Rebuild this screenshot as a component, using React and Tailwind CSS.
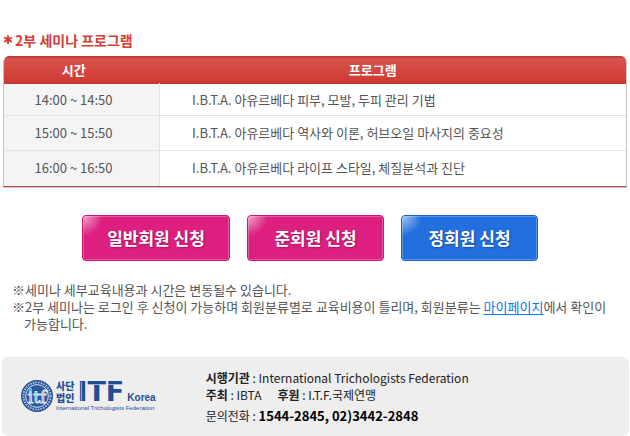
import clsx from 'clsx';

const sessions = [
  { time: '14:00 ~ 14:50', program: 'I.B.T.A. 아유르베다 피부, 모발, 두피 관리 기법' },
  { time: '15:00 ~ 15:50', program: 'I.B.T.A. 아유르베다 역사와 이론, 허브오일 마사지의 중요성' },
  { time: '16:00 ~ 16:50', program: 'I.B.T.A. 아유르베다 라이프 스타일, 체질분석과 진단' },
];

const ProgramTable = () => (
  <div className="overflow-hidden rounded-t-md border-x border-b border-x-[#c4c4c4] border-b-[#b8484a] shadow-[0_1px_0_#c8c8c8]">
    <table className="w-full table-fixed border-collapse">
      <thead>
        <tr className="h-[27px] border-t border-b border-t-[#b04340] border-b-[#b43a34] bg-linear-to-b from-[#d7544e] to-[#d03830] text-[13px] leading-5 text-white">
          <th className="w-1/4 pr-4 font-bold">시간</th>
          <th className="pr-10 font-bold">프로그램</th>
        </tr>
      </thead>
      <tbody className="text-[13px] leading-5 text-[#555]">
        {sessions.map((session, index) => (
          <tr key={session.time} className={clsx('border-[#e2e2e2]', index === 0 ? 'h-8' : 'h-[35px] border-t')}>
            <td className="border-r border-[#e2e2e2] bg-[#f4f4f4] pr-4 text-center">{session.time}</td>
            <td className="pl-8">{session.program}</td>
          </tr>
        ))}
      </tbody>
    </table>
  </div>
);

const ApplyButton = ({ label, wide, blue }) => (
  <button
    type="button"
    className={clsx(
      'relative h-[46px] cursor-pointer overflow-hidden rounded-sm border text-[17px] leading-6 font-bold text-white text-shadow-[1px_1px_2px_rgb(0_0_0/0.3)]',
      wide ? 'w-[148px]' : 'w-[137px]',
      blue ? 'border-[#1c62cb] bg-[#236fdd]' : 'border-[#ce1571] bg-[#dd2080]'
    )}
  >
    <span className="absolute inset-0 rounded-xs border border-white/25" />
    <span className="absolute top-0 left-0 h-5 w-5 bg-radial-[at_0%_0%] from-white/60 to-transparent to-70%" />
    {label}
  </button>
);

const Emblem = () => (
  <svg viewBox="0 0 34 34" className="h-[34px] w-[34px] shrink-0" aria-hidden="true">
    <circle cx="17" cy="17" r="16" fill="#245399" />
    <circle cx="17" cy="17" r="13.6" fill="none" stroke="#b4c6df" strokeWidth="2" strokeDasharray="1.5 1.2" />
    <circle cx="17" cy="17" r="11.4" fill="#28599f" stroke="#edf1f6" strokeWidth="0.9" />
    <text
      x="17"
      y="23.5"
      textAnchor="middle"
      fontFamily="'DejaVu Serif', serif"
      fontSize="17"
      fill="#28599f"
      stroke="#dfe8f2"
      strokeWidth="1"
    >
      itf
    </text>
    <circle cx="10.5" cy="10.5" r="1.8" fill="#4dc0ed" />
  </svg>
);

const Logo = () => (
  <div className="flex items-center gap-0.5 text-[#1d4e96]">
    <Emblem />
    <div className="flex flex-col">
      <div className="flex items-end gap-[3px]">
        <div className="text-[10px] leading-3 font-black">
          <p>사단</p>
          <p>법인</p>
        </div>
        <span className="relative font-['DejaVu_Sans',sans-serif] text-[27px] leading-6 font-bold">
          ITF
          <span className="absolute top-1 right-0 left-2.5 h-px bg-[#eee]/60" />
          <span className="absolute top-0.5 bottom-0.5 left-1 h-5 w-px bg-[#eee]/60" />
        </span>
        <span className="font-['Liberation_Sans',sans-serif] text-[10px] leading-3 font-bold">Korea</span>
      </div>
      <span className="font-['Liberation_Sans',sans-serif] text-[6px] leading-2 whitespace-nowrap">
        International Trichologists Federation
      </span>
    </div>
  </div>
);

const Footer = () => (
  <footer className="mr-px ml-0.5 flex items-center gap-[50px] rounded-md bg-[#eee] py-3 pl-[18px]">
    <Logo />
    <div className="text-[12px] leading-[17px] text-[#222]">
      <p>
        <b>시행기관</b> : International Trichologists Federation
      </p>
      <p className="flex gap-4">
        <span>
          <b>주최</b> : IBTA
        </span>
        <span>
          <b>후원</b> : I.T.F.국제연맹
        </span>
      </p>
      <p className="mt-1">
        문의전화 : <b className="text-[13px] text-black">1544-2845, 02)3442-2848</b>
      </p>
    </div>
  </footer>
);

export default function App() {
  return (
    <main className="bg-white pt-[30px] font-['Noto_Sans_CJK_KR',sans-serif] break-keep">
      <section className="px-[3px]">
        <h2 className="mb-1.5 flex items-center gap-0.5 text-[14px] leading-5 font-bold text-[#d63c35]">
          <span className="font-['DejaVu_Sans',sans-serif] text-[12px]">✱</span>
          2부 세미나 프로그램
        </h2>
        <ProgramTable />
      </section>

      <div className="mt-7 flex justify-center gap-[17px] pr-2.5">
        <ApplyButton label="일반회원 신청" wide />
        <ApplyButton label="준회원 신청" />
        <ApplyButton label="정회원 신청" blue />
      </div>

      <div className="mt-5 mb-[25px] pr-2 pl-6 text-[13px] leading-[17px] text-[#555]">
        <p className="-indent-3">※세미나 세부교육내용과 시간은 변동될수 있습니다.</p>
        <p className="-indent-3">
          ※2부 세미나는 로그인 후 신청이 가능하며 회원분류별로 교육비용이 틀리며, 회원분류는{' '}
          <a href="#mypage" className="text-[#0879e8] underline underline-offset-2">마이페이지</a>에서 확인이 가능합니다.
        </p>
      </div>

      <Footer />
    </main>
  );
}
